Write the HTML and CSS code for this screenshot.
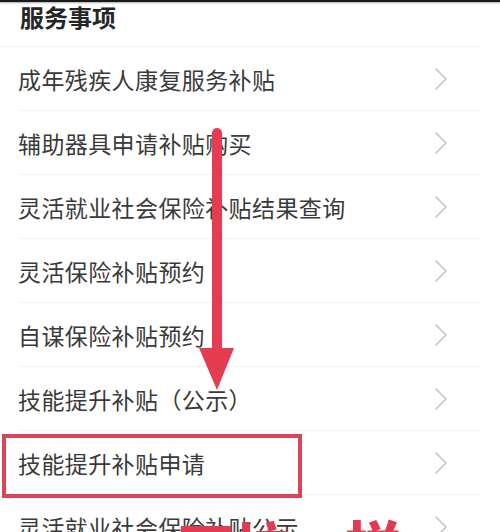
FILE: index.html
```html
<!DOCTYPE html>
<html lang="zh">
<head>
<meta charset="utf-8">
<link rel="stylesheet" href="styles.css">
</head>
<body>
<div class="page">
  <div class="topbar"></div>
  <div class="header"><h1 class="title">服务事项</h1></div>
  <ul class="list">
    <li class="row"><span class="label">成年残疾人康复服务补贴</span><svg class="chev" viewBox="0 0 14 24"><polyline points="2,2 12,12 2,22"/></svg></li>
    <li class="row"><span class="label">辅助器具申请补贴购买</span><svg class="chev" viewBox="0 0 14 24"><polyline points="2,2 12,12 2,22"/></svg></li>
    <li class="row"><span class="label">灵活就业社会保险补贴结果查询</span><svg class="chev" viewBox="0 0 14 24"><polyline points="2,2 12,12 2,22"/></svg></li>
    <li class="row"><span class="label">灵活保险补贴预约</span><svg class="chev" viewBox="0 0 14 24"><polyline points="2,2 12,12 2,22"/></svg></li>
    <li class="row"><span class="label">自谋保险补贴预约</span><svg class="chev" viewBox="0 0 14 24"><polyline points="2,2 12,12 2,22"/></svg></li>
    <li class="row"><span class="label">技能提升补贴（公示）</span><svg class="chev" viewBox="0 0 14 24"><polyline points="2,2 12,12 2,22"/></svg></li>
    <li class="row"><span class="label">技能提升补贴申请</span><svg class="chev" viewBox="0 0 14 24"><polyline points="2,2 12,12 2,22"/></svg></li>
    <li class="row"><span class="label">灵活就业社会保险补贴公示</span><svg class="chev" viewBox="0 0 14 24"><polyline points="2,2 12,12 2,22"/></svg></li>
  </ul>
  <div class="highlight"></div>
  <svg class="arrow" viewBox="0 0 40 262">
    <rect x="15" y="0" width="10" height="226" rx="5" ry="5"/>
    <polygon points="2,220 37,220 20,262"/>
  </svg>
  <div class="caption"><span class="cap-a">下拉</span><span class="cap-b">样</span></div>
</div>
</body>
</html>
```

FILE: styles.css
```css
html, body {
  margin: 0;
  padding: 0;
  background: #ffffff;
}
body {
  font-family: "Noto Sans CJK SC", "Noto Sans", sans-serif;
  color: #333333;
}
.page {
  position: relative;
  width: 500px;
  height: 532px;
  overflow: hidden;
}
.topbar {
  height: 2px;
  background: #1a1a1a;
  box-shadow: 0 1px 2px rgba(0,0,0,0.35);
}
.header {
  padding-left: 20px;
  border-bottom: 1px solid #f0f0f0;
  margin-right: 20px;
  box-sizing: border-box;
  height: 45px;
}
.title {
  margin: 0;
  font-size: 24px;
  line-height: 30px;
  font-weight: 700;
  color: #262626;
}
.list {
  list-style: none;
  margin: 0;
  padding: 0;
}
.row {
  height: 64px;
  box-sizing: border-box;
  border-bottom: 1px solid #f0f0f0;
  margin-left: 20px;
  margin-right: 20px;
  display: flex;
  align-items: center;
  justify-content: space-between;
}
.label {
  font-size: 23px;
  color: #3a3a3a;
  margin-left: -2px;
  letter-spacing: 0.4px;
}
.chev {
  width: 14px;
  height: 24px;
  margin-right: 32px;
  fill: none;
  stroke: #c4c4c4;
  stroke-width: 1.6;
  stroke-linecap: round;
  stroke-linejoin: round;
}
.highlight {
  position: absolute;
  left: 2px;
  top: 434px;
  width: 300px;
  height: 64px;
  box-sizing: border-box;
  border: 4px solid #dc4354;
}
.arrow {
  position: absolute;
  left: 197px;
  top: 128px;
  width: 40px;
  height: 262px;
  fill: #e63c52;
}
.caption {
  position: absolute;
  left: 0;
  top: 508px;
  width: 500px;
  height: 60px;
  color: #e23a50;
  font-weight: 900;
  font-size: 56px;
  line-height: 56px;
}
.cap-a {
  position: absolute;
  left: 178px;
  top: 10px;
}
.cap-b {
  position: absolute;
  left: 345px;
  top: 8px;
}
```
